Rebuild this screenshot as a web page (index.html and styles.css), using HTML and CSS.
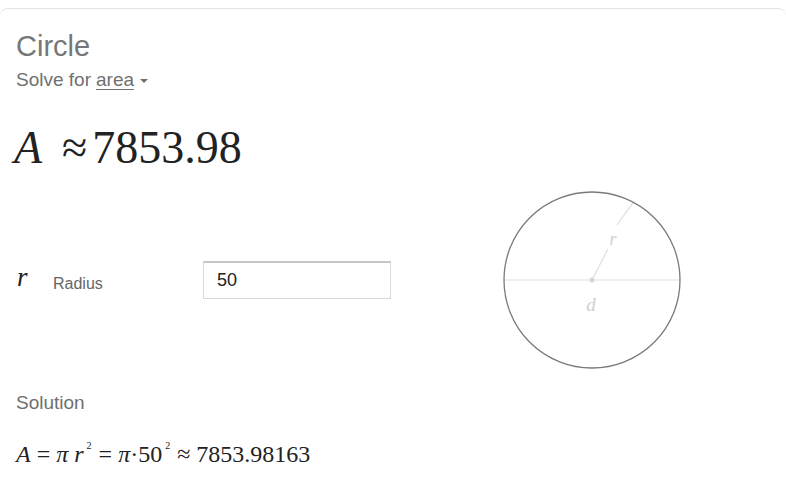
FILE: index.html
```html
<!DOCTYPE html>
<html>
<head>
<meta charset="utf-8">
<link rel="stylesheet" href="styles.css">
</head>
<body>
<div class="card">
  <div class="title">Circle</div>
  <div class="subtitle">Solve for <span class="link">area</span><span class="caret"></span></div>
  <div class="result"><i class="var">A</i><span class="approx">≈</span>7853.98</div>
  <div class="middle">
    <div class="inputs">
      <i class="rvar">r</i>
      <span class="label">Radius</span>
      <div class="field">50</div>
    </div>
    <svg class="diagram" width="180" height="180" viewBox="0 0 180 180">
      <line x1="2" y1="90" x2="178" y2="90" stroke="#dedede" stroke-width="1.2"/>
      <line x1="90" y1="90" x2="106" y2="59" stroke="#dedede" stroke-width="1.2"/>
      <line x1="115" y1="35" x2="131.3" y2="12.3" stroke="#dedede" stroke-width="1.2"/>
      <circle cx="90" cy="90" r="2.5" fill="#d6d6d6"/>
      <circle cx="90" cy="90" r="88" fill="none" stroke="#7a7a7a" stroke-width="1.3"/>
      <text x="111" y="55" class="dlabel" text-anchor="middle">r</text>
      <text x="89" y="121" class="dlabel dl" text-anchor="middle">d</text>
    </svg>
  </div>
  <div class="soltitle">Solution</div>
  <div class="formula"><i>A</i> = <i>π</i> <i>r</i><span class="sup">2</span> = <i>π</i>·50<span class="sup">2</span> ≈ 7853.98163</div>
</div>
</body>
</html>
```
FILE: styles.css
```css
html, body {
  margin: 0;
  padding: 0;
  background: #fff;
}
body {
  font-family: "Liberation Sans", Arial, sans-serif;
}
.card {
  margin-top: 8px;
  border-top: 1px solid #e2e2e2;
  border-radius: 8px 8px 0 0;
  padding: 20px 16px 0 16px;
  height: 480px;
  box-sizing: border-box;
}
.title {
  font-size: 29px;
  line-height: 34px;
  color: #777;
}
.subtitle {
  margin-top: 5px;
  font-size: 19px;
  line-height: 24px;
  color: #707070;
  display: flex;
  align-items: center;
}
.link {
  text-decoration: underline;
  text-underline-offset: 3px;
  margin-left: 5px;
}
.caret {
  margin-left: 6px;
  width: 0;
  height: 0;
  border-left: 4px solid transparent;
  border-right: 4px solid transparent;
  border-top: 4px solid #707070;
  margin-top: 2px;
}
.result {
  margin-top: 29px;
  font-family: "Liberation Serif", "Times New Roman", serif;
  font-size: 46px;
  line-height: 54px;
  color: #222;
  margin-left: -2px;
}
.var {
  margin-right: 20px;
}
.approx {
  margin-right: 5px;
}
.middle {
  margin-top: 15px;
  display: flex;
  align-items: center;
  height: 180px;
}
.inputs {
  width: 486px;
  display: flex;
  align-items: center;
}
.rvar {
  font-family: "Liberation Serif", "Times New Roman", serif;
  font-size: 27px;
  color: #222;
  width: 36px;
  margin-left: 1px;
  margin-top: -6px;
}
.label {
  font-size: 16px;
  color: #666;
  width: 150px;
  margin-top: 7px;
}
.field {
  width: 188px;
  height: 38px;
  box-sizing: border-box;
  border: 1px solid #d9d9d9;
  border-top: 2px solid #c6c6c6;
  padding-left: 13px;
  font-size: 18px;
  line-height: 35px;
  color: #222;
  margin-top: -1px;
}
.diagram {
  display: block;
}
.dlabel {
  font-family: "Liberation Serif", "Times New Roman", serif;
  font-style: italic;
  font-size: 18px;
  fill: #d0d0d0;
}
.dl {
  font-size: 19px;
}
.soltitle {
  margin-top: 21px;
  font-size: 19px;
  line-height: 24px;
  color: #707070;
}
.formula {
  margin-top: 16px;
  font-family: "Liberation Serif", "Times New Roman", serif;
  font-size: 24px;
  line-height: 30px;
  color: #222;
}
.sup {
  font-size: 10px;
  vertical-align: 13px;
  margin-left: 3px;
  margin-right: 1px;
}
```
